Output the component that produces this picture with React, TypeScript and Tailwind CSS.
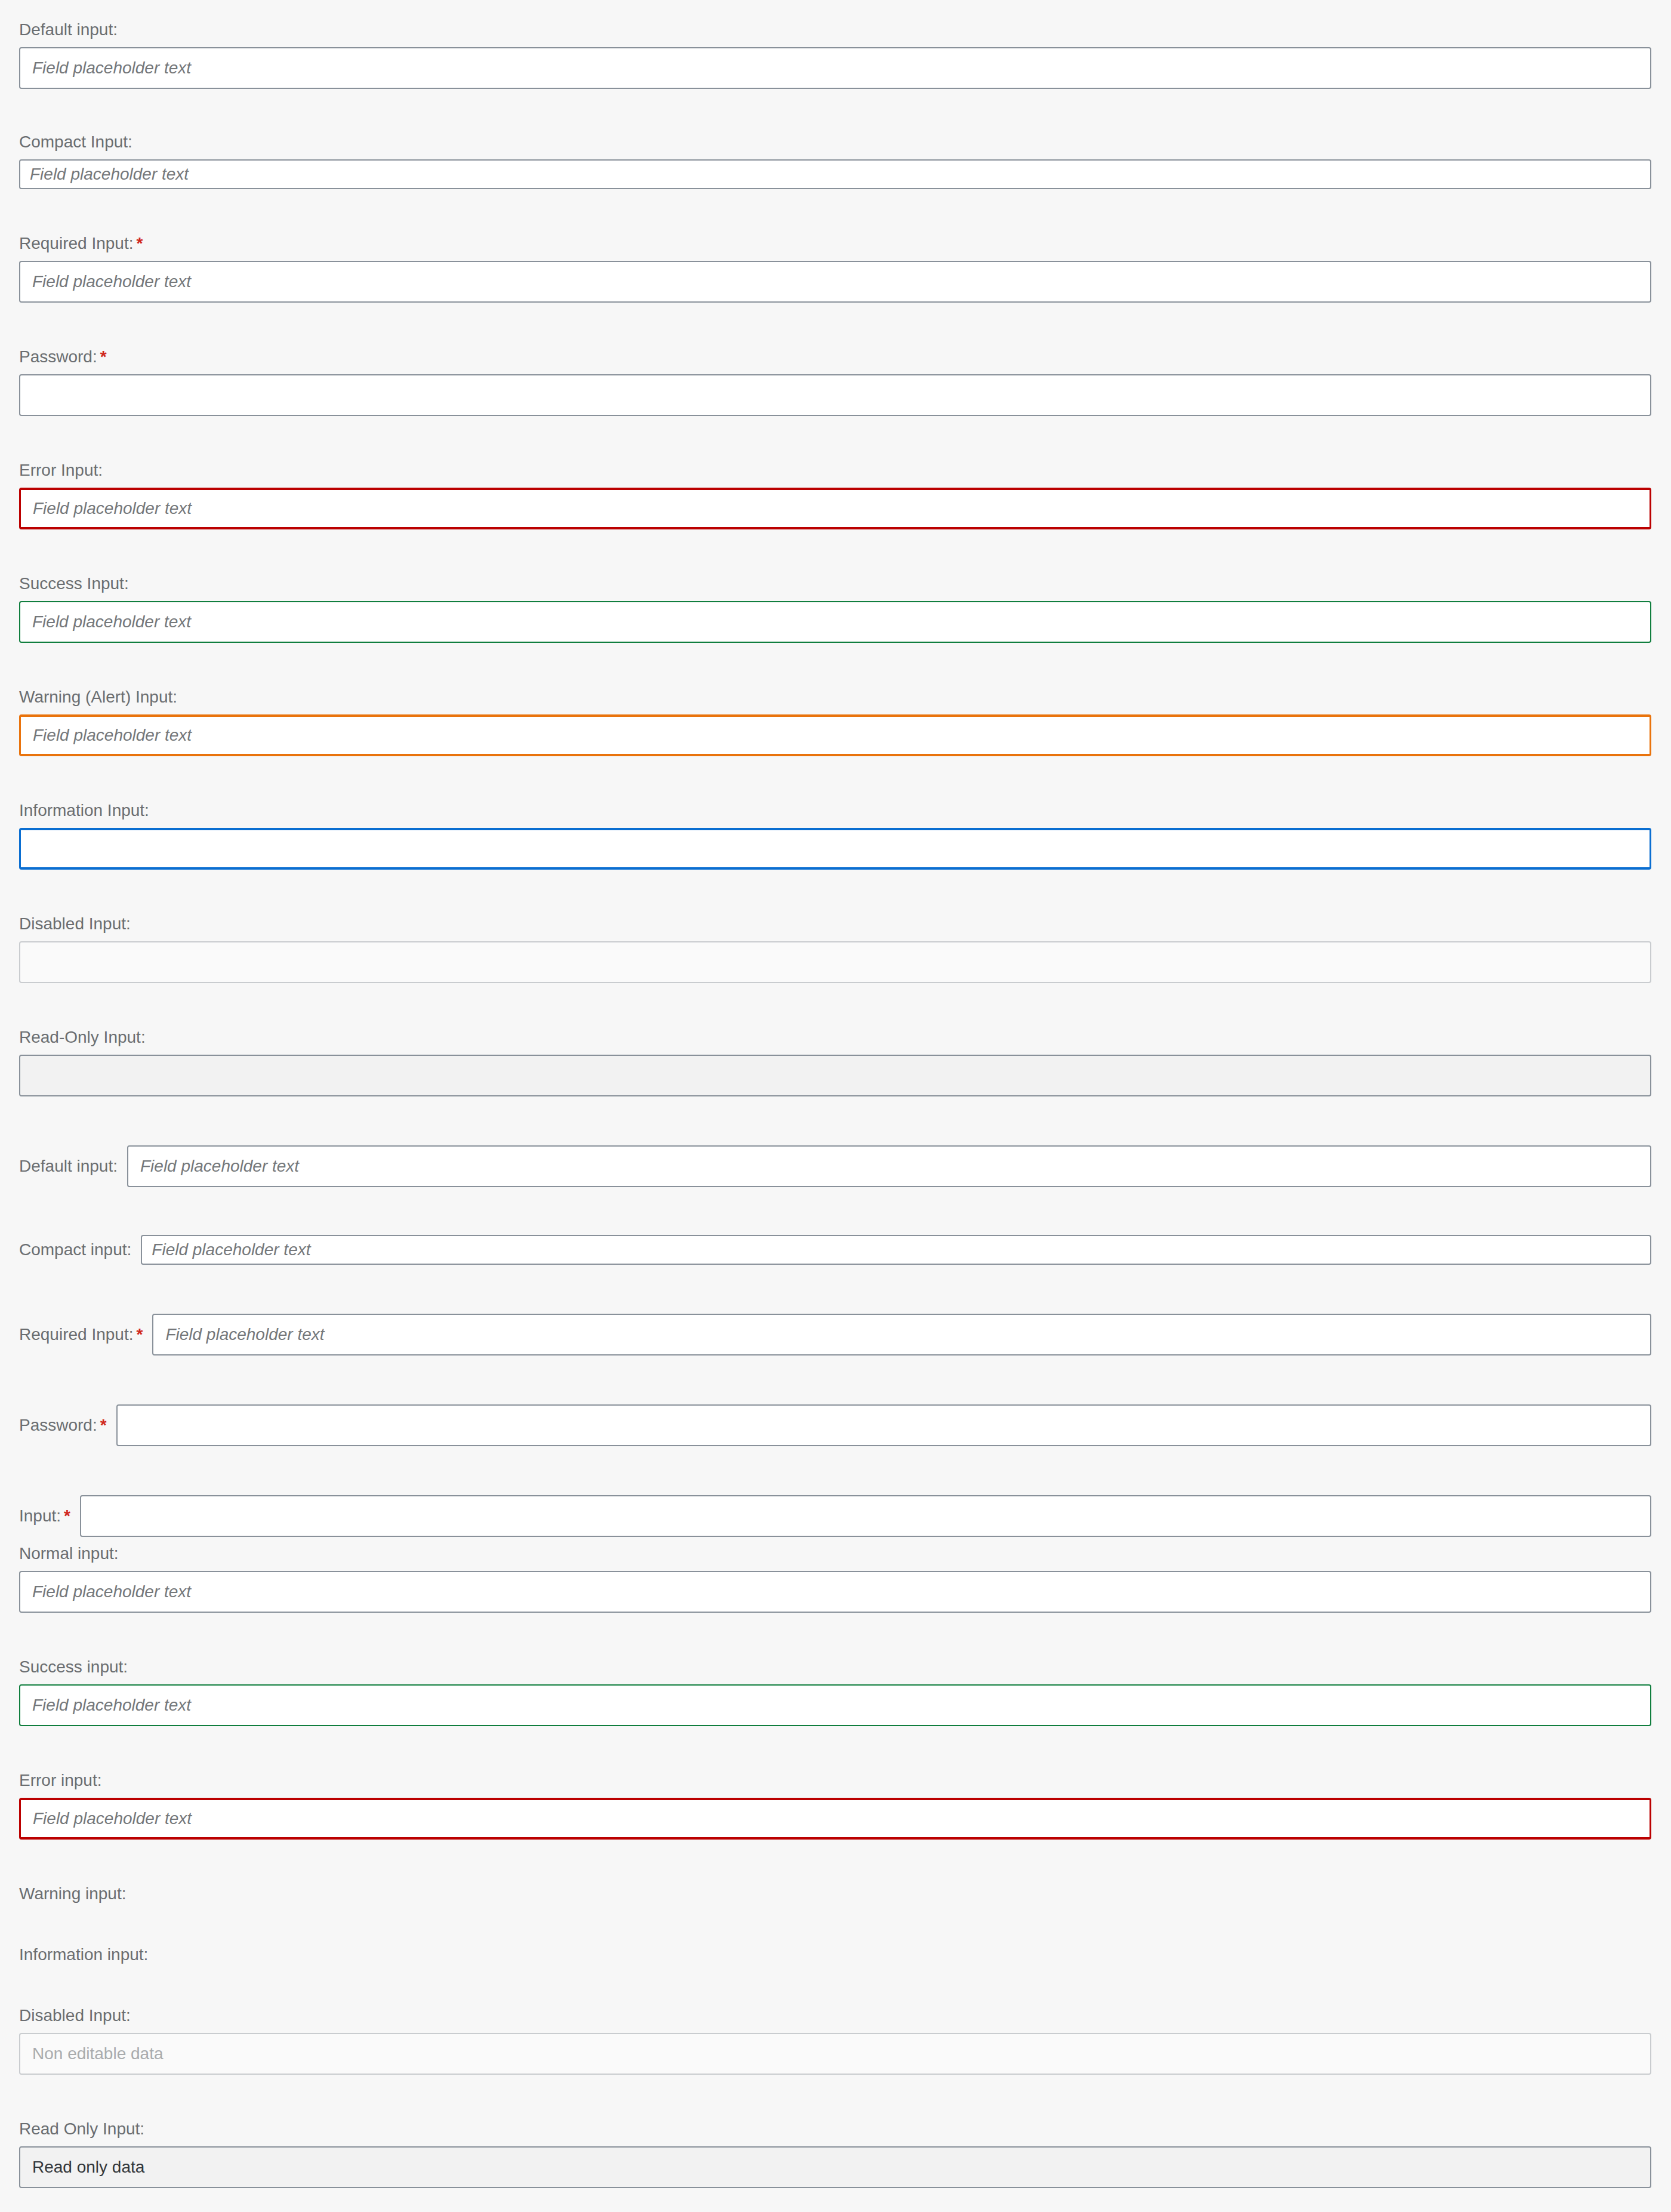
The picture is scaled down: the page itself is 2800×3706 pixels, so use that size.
import React from 'react';

type Tone = 'default' | 'error' | 'success' | 'warning' | 'information' | 'disabled' | 'readonly';

const toneClass: Record<Tone, string> = {
  default: 'bg-white border-2 border-[#89919a]',
  error: 'bg-white border-x-[3px] border-y-4 border-[#bb0000]',
  success: 'bg-white border-2 border-[#107e3e]',
  warning: 'bg-white border-x-[3px] border-y-4 border-[#e9730c]',
  information: 'bg-white border-x-[3px] border-y-4 border-[#0a6ed1]',
  disabled: 'bg-[#fafafa] border-2 border-[#c9cccf] text-[#a9abad]',
  readonly: 'bg-[#f2f2f2] border-2 border-[#89919a] text-[#32363a]',
};

// Arial-metric stand-in for the "72" typeface
const font = "font-['Liberation_Sans',Arial,sans-serif]";

function Star() {
  return <span className="ml-[5px] font-bold text-[#d0271d]">*</span>;
}

function Label({ text, required }: { text: string; required?: boolean }) {
  return (
    <label className={`block h-[38px] text-[28px] leading-[38px] text-[#6a6d70] whitespace-nowrap ${font}`}>
      {text}
      {required && <Star />}
    </label>
  );
}

function Field({
  tone = 'default',
  compact,
  placeholder,
  value,
}: {
  tone?: Tone;
  compact?: boolean;
  placeholder?: string;
  value?: string;
}) {
  return (
    <input
      readOnly={tone === 'readonly'}
      disabled={tone === 'disabled'}
      defaultValue={value}
      placeholder={placeholder}
      className={`block w-full min-w-0 rounded-[4px] outline-none text-[28px] ${font} ${
        compact ? 'h-[50px] px-[16px]' : 'h-[70px] px-[20px]'
      } placeholder:italic placeholder:text-[#74777a] ${toneClass[tone]}`}
    />
  );
}

function StackedItem({
  label,
  required,
  tone,
  compact,
  placeholder,
  value,
  className = '',
}: {
  label: string;
  required?: boolean;
  tone?: Tone;
  compact?: boolean;
  placeholder?: string;
  value?: string;
  className?: string;
}) {
  return (
    <div className={`flex flex-col ${className}`}>
      <div className="mb-[10px]">
        <Label text={label} required={required} />
      </div>
      <Field tone={tone} compact={compact} placeholder={placeholder} value={value} />
    </div>
  );
}

function InlineItem({
  label,
  required,
  compact,
  placeholder,
  className = '',
}: {
  label: string;
  required?: boolean;
  compact?: boolean;
  placeholder?: string;
  className?: string;
}) {
  return (
    <div className={`flex items-center ${compact ? 'h-[50px]' : 'h-[70px]'} ${className}`}>
      <label className={`mr-[16px] shrink-0 text-[28px] leading-[38px] text-[#6a6d70] whitespace-nowrap ${font}`}>
        {label}
        {required && <Star />}
      </label>
      <Field compact={compact} placeholder={placeholder} />
    </div>
  );
}

const PH = 'Field placeholder text';

export default function App() {
  return (
    <div className="min-h-screen bg-[#f7f7f7] pt-[31px] pl-[32px] pr-[33px] pb-[41px]">
      <div className="flex flex-col gap-[72px]">
        <StackedItem label="Default input:" placeholder={PH} className="-mb-[2px]" />
        <StackedItem label="Compact Input:" compact placeholder={PH} />
        <StackedItem label="Required Input:" required placeholder={PH} />
        <StackedItem label="Password:" required />
        <StackedItem label="Error Input:" tone="error" placeholder={PH} />
        <StackedItem label="Success Input:" tone="success" placeholder={PH} />
        <StackedItem label="Warning (Alert) Input:" tone="warning" placeholder={PH} />
        <StackedItem label="Information Input:" tone="information" />
        <StackedItem label="Disabled Input:" tone="disabled" />
        <StackedItem label="Read-Only Input:" tone="readonly" />
      </div>

      <div className="mt-[82px] flex flex-col">
        <InlineItem label="Default input:" placeholder={PH} />
        <InlineItem label="Compact input:" compact placeholder={PH} className="mt-[80px]" />
        <InlineItem label="Required Input:" required placeholder={PH} className="mt-[82px]" />
        <InlineItem label="Password:" required className="mt-[82px]" />
        <InlineItem label="Input:" required className="mt-[82px]" />
      </div>

      <div className="mt-[9px] flex flex-col gap-[72px]">
        <StackedItem label="Normal input:" placeholder={PH} />
        <StackedItem label="Success input:" tone="success" placeholder={PH} />
        <StackedItem label="Error input:" tone="error" placeholder={PH} />
      </div>

      {/* warning / information items render only their labels */}
      <div className="mt-[72px] h-[30px]">
        <Label text="Warning input:" />
      </div>
      <div className="mt-[72px] h-[30px]">
        <Label text="Information input:" />
      </div>

      <div className="mt-[72px] flex flex-col gap-[72px]">
        <StackedItem label="Disabled Input:" tone="disabled" value="Non editable data" />
        <StackedItem label="Read Only Input:" tone="readonly" value="Read only data" />
      </div>
    </div>
  );
}
